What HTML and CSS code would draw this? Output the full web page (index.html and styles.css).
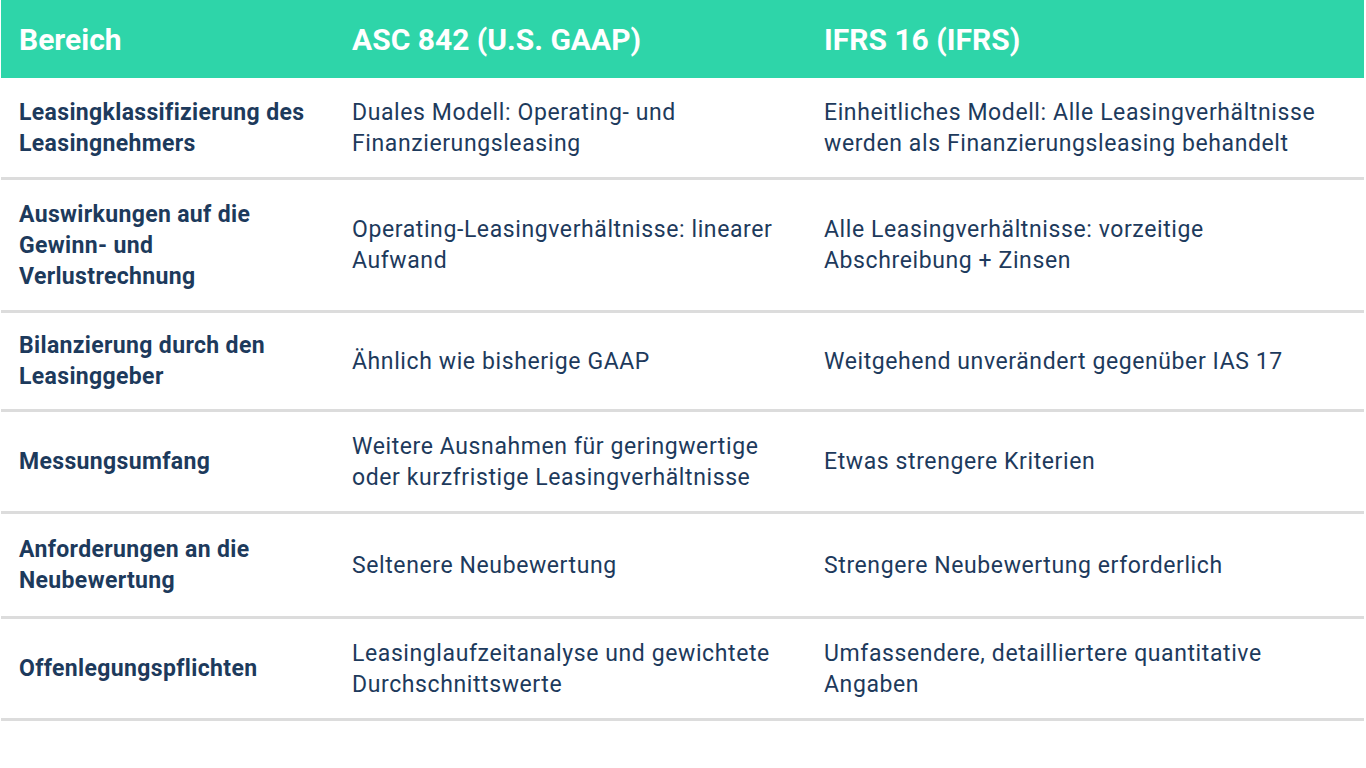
FILE: index.html
```html
<!DOCTYPE html>
<html lang="de">
<head>
<meta charset="utf-8">
<title>ASC 842 vs IFRS 16</title>
<link rel="stylesheet" href="styles.css">
</head>
<body>
<div class="table">
  <div class="row head">
    <div class="cell c1">Bereich</div>
    <div class="cell c2">ASC 842 (U.S. GAAP)</div>
    <div class="cell c3">IFRS 16 (IFRS)</div>
  </div>
  <div class="row r1">
    <div class="cell c1">Leasingklassifizierung des Leasingnehmers</div>
    <div class="cell c2">Duales Modell: Operating- und Finanzierungsleasing</div>
    <div class="cell c3">Einheitliches Modell: Alle Leasingverhältnisse werden als Finanzierungsleasing behandelt</div>
  </div>
  <div class="row r2">
    <div class="cell c1">Auswirkungen auf die Gewinn- und Verlustrechnung</div>
    <div class="cell c2">Operating-Leasingverhältnisse: linearer Aufwand</div>
    <div class="cell c3">Alle Leasingverhältnisse: vorzeitige Abschreibung + Zinsen</div>
  </div>
  <div class="row r3">
    <div class="cell c1">Bilanzierung durch den Leasinggeber</div>
    <div class="cell c2">Ähnlich wie bisherige GAAP</div>
    <div class="cell c3">Weitgehend unverändert gegenüber IAS 17</div>
  </div>
  <div class="row r4">
    <div class="cell c1">Messungsumfang</div>
    <div class="cell c2">Weitere Ausnahmen für geringwertige oder kurzfristige Leasingverhältnisse</div>
    <div class="cell c3">Etwas strengere Kriterien</div>
  </div>
  <div class="row r5">
    <div class="cell c1">Anforderungen an die Neubewertung</div>
    <div class="cell c2">Seltenere Neubewertung</div>
    <div class="cell c3">Strengere Neubewertung erforderlich</div>
  </div>
  <div class="row r6">
    <div class="cell c1">Offenlegungspflichten</div>
    <div class="cell c2">Leasinglaufzeitanalyse und gewichtete Durchschnittswerte</div>
    <div class="cell c3">Umfassendere, detailliertere quantitative Angaben</div>
  </div>
</div>
</body>
</html>
```
FILE: styles.css
```css
html, body {
  margin: 0;
  padding: 0;
  background: #ffffff;
}
body {
  font-family: Roboto, "Noto Sans", sans-serif;
  color: #1d3a5c;
}
.table {
  width: 1363px;
  margin-left: 1px;
}
.row {
  display: grid;
  grid-template-columns: 351px 472px 1fr;
  align-items: center;
  border-bottom: 3px solid #dcdcdc;
  box-sizing: border-box;
}
.cell {
  font-size: 23px;
  line-height: 31px;
  letter-spacing: 0.6px;
}
.c1 {
  padding-left: 18px;
  padding-right: 28px;
  font-weight: 700;
  letter-spacing: 0.35px;
}
.c2 {
  padding-right: 30px;
}
.c3 {
  padding-right: 30px;
}
.row.head {
  background: #2ed5a9;
  height: 78px;
  border-bottom: none;
}
.row.head .cell {
  color: #ffffff;
  font-weight: 700;
  font-size: 30px;
  line-height: 36px;
  letter-spacing: 0;
  padding-top: 2px;
}
.r1 { height: 102px; }
.r2 { height: 133px; }
.r3 { height: 99px; }
.r4 { height: 102px; }
.r5 { height: 105px; }
.r6 { height: 102px; }
```
